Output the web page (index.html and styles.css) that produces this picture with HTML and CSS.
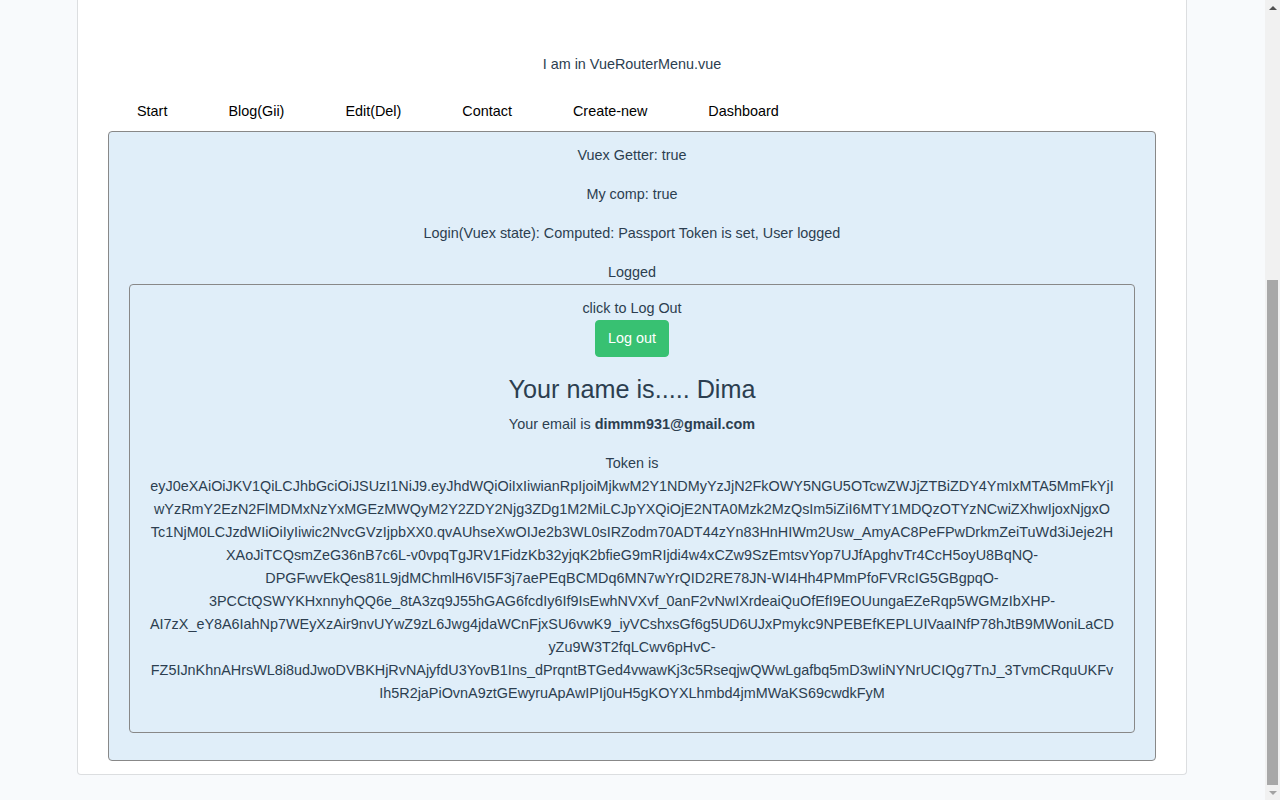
FILE: index.html
```html
<!DOCTYPE html>
<html lang="en">
<head>
<meta charset="utf-8">
<title>VueRouterMenu</title>
<link rel="stylesheet" href="styles.css">
</head>
<body>
<div class="viewport">
  <main class="page">
    <div class="card">
      <p class="where">I am in VueRouterMenu.vue</p>
      <nav class="menu">
        <a href="#">Start</a>
        <a href="#">Blog(Gii)</a>
        <a href="#">Edit(Del)</a>
        <a href="#">Contact</a>
        <a href="#">Create-new</a>
        <a href="#">Dashboard</a>
      </nav>
      <section class="panel">
        <p class="line">Vuex Getter: true</p>
        <p class="line">My comp: true</p>
        <p class="line">Login(Vuex state): Computed: Passport Token is set, User logged</p>
        <div class="logged">Logged</div>
        <div class="inner">
          <div class="click">click to Log Out</div>
          <button class="btn-logout" type="button">Log out</button>
          <h3 class="name">Your name is..... Dima</h3>
          <p class="line">Your email is <strong>dimmm931@gmail.com</strong></p>
          <p class="line token">Token is<br>eyJ0eXAiOiJKV1QiLCJhbGciOiJSUzI1NiJ9.eyJhdWQiOiIxIiwianRpIjoiMjkwM2Y1NDMyYzJjN2FkOWY5NGU5OTcwZWJjZTBiZDY4YmIxMTA5MmFkYjI<wbr>wYzRmY2EzN2FlMDMxNzYxMGEzMWQyM2Y2ZDY2Njg3ZDg1M2MiLCJpYXQiOjE2NTA0Mzk2MzQsIm5iZiI6MTY1MDQzOTYzNCwiZXhwIjoxNjgxO<br>Tc1NjM0LCJzdWIiOiIyIiwic2NvcGVzIjpbXX0.qvAUhseXwOIJe2b3WL0sIRZodm70ADT44zYn83HnHIWm2Usw_AmyAC8PeFPwDrkmZeiTuWd3iJeje2H<br>XAoJiTCQsmZeG36nB7c6L-v0vpqTgJRV1FidzKb32yjqK2bfieG9mRIjdi4w4xCZw9SzEmtsvYop7UJfApghvTr4CcH5oyU8BqNQ-DPGFwvEkQes81L9jdMChmlH6VI5F3j7aePEqBCMDq6MN7wYrQID2RE78JN-WI4Hh4PMmPfoFVRcIG5GBgpqO-3PCCtQSWYKHxnnyhQQ6e_8tA3zq9J55hGAG6fcdIy6If9IsEwhNVXvf_0anF2vNwIXrdeaiQuOfEfI9EOUungaEZeRqp5WGMzIbXHP-AI7zX_eY8A6IahNp7WEyXzAir9nvUYwZ9zL6Jwg4jdaWCnFjxSU6vwK9_iyVCshxsGf6g5UD6UJxPmykc9NPEBEfKEPLUIVaaINfP78hJtB9MWoniLaCD<wbr>yZu9W3T2fqLCwv6pHvC-FZ5IJnKhnAHrsWL8i8udJwoDVBKHjRvNAjyfdU3YovB1Ins_dPrqntBTGed4vwawKj3c5RseqjwQWwLgafbq5mD3wIiNYNrUCIQg7TnJ_3TvmCRquUKFv<br>Ih5R2jaPiOvnA9ztGEwyruApAwIPIj0uH5gKOYXLhmbd4jmMWaKS69cwdkFyM</p>
        </div>
      </section>
    </div>
  </main>
  <div class="scrollbar" aria-hidden="true">
    <div class="arrow arrow-up"></div>
    <div class="track"><div class="thumb"></div></div>
    <div class="arrow arrow-down"></div>
  </div>
</div>
</body>
</html>
```
FILE: styles.css
```css
* { box-sizing: border-box; }

html, body {
  margin: 0;
  padding: 0;
  height: 100%;
}

body {
  font-family: "Liberation Sans", Arial, sans-serif;
  font-size: 14.4px;
  line-height: 1.6;
  color: #2c3e50;
  background: #f8fafc;
}

.viewport {
  display: flex;
  height: 800px;
  overflow: hidden;
}

.page {
  flex: 1;
  min-width: 0;
  padding-right: 1px;
}

.card {
  width: 1110px;
  margin: 0 auto;
  background: #fff;
  border: 1px solid #dcdee0;
  border-top: 0;
  border-radius: 0 0 4px 4px;
  padding: 53px 30px 13px;
  text-align: center;
}

.where {
  margin: 0 0 24px;
}

.menu {
  display: flex;
  gap: 61px;
  padding: 0 0 8px 29px;
}

.menu a {
  color: #000;
  text-decoration: none;
}

.panel {
  background: #e0eef9;
  border: 1px solid #888;
  border-radius: 4px;
  padding: 12px 20px 11px;
}

.line {
  margin: 0 0 16px;
}

.inner {
  border: 1px solid #888;
  border-radius: 4px;
  padding: 12px 19px 11px;
  margin-bottom: 16px;
}

.btn-logout {
  font-family: inherit;
  font-size: 14.4px;
  line-height: 1.6;
  color: #fff;
  background: #38c172;
  border: 1px solid #38c172;
  border-radius: 4px;
  padding: 6px 12px;
  cursor: pointer;
}

.name {
  font-size: 25.2px;
  font-weight: 400;
  line-height: 1.2;
  margin: 17px 0 8px;
}

.token {
  overflow-wrap: break-word;
  word-wrap: break-word;
}

.scrollbar {
  width: 15px;
  flex: none;
  background: #f1f1f1;
  display: flex;
  flex-direction: column;
}

.arrow {
  height: 15px;
  display: flex;
  align-items: center;
  justify-content: center;
}

.arrow::before {
  content: "";
  border-left: 4px solid transparent;
  border-right: 4px solid transparent;
}

.arrow-up::before {
  border-bottom: 4px solid #505050;
}

.arrow-down::before {
  border-top: 4px solid #a3a3a3;
}

.track {
  flex: 1;
  display: flex;
  flex-direction: column;
  justify-content: flex-end;
  padding: 0 2px;
}

.thumb {
  height: 505px;
  background: #a8a8a8;
}
```
